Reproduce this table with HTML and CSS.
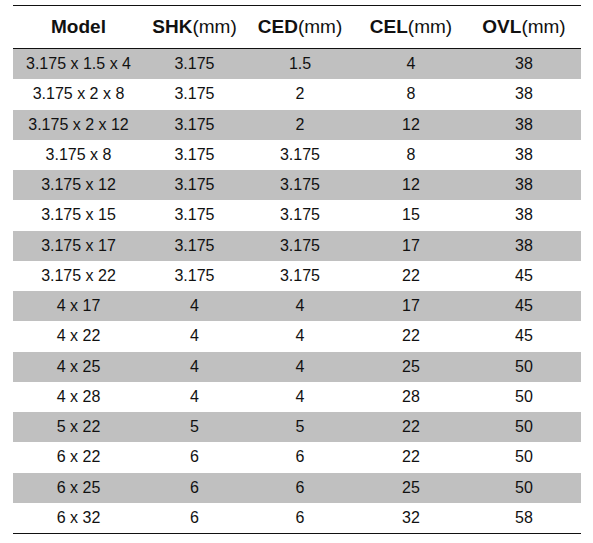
FILE: index.html
```html
<!DOCTYPE html>
<html>
<head>
<meta charset="utf-8">
<link rel="stylesheet" href="styles.css">
</head>
<body>
<table class="spec">
  <colgroup>
    <col class="c1"><col class="c2"><col class="c3"><col class="c4"><col class="c5">
  </colgroup>
  <thead>
    <tr>
      <th><b>Model</b></th>
      <th><b>SHK</b>(mm)</th>
      <th><b>CED</b>(mm)</th>
      <th><b>CEL</b>(mm)</th>
      <th><b>OVL</b>(mm)</th>
    </tr>
  </thead>
  <tbody>
    <tr class="g"><td>3.175 x 1.5 x 4</td><td>3.175</td><td>1.5</td><td>4</td><td>38</td></tr>
    <tr><td>3.175 x 2 x 8</td><td>3.175</td><td>2</td><td>8</td><td>38</td></tr>
    <tr class="g"><td>3.175 x 2 x 12</td><td>3.175</td><td>2</td><td>12</td><td>38</td></tr>
    <tr><td>3.175 x 8</td><td>3.175</td><td>3.175</td><td>8</td><td>38</td></tr>
    <tr class="g"><td>3.175 x 12</td><td>3.175</td><td>3.175</td><td>12</td><td>38</td></tr>
    <tr><td>3.175 x 15</td><td>3.175</td><td>3.175</td><td>15</td><td>38</td></tr>
    <tr class="g"><td>3.175 x 17</td><td>3.175</td><td>3.175</td><td>17</td><td>38</td></tr>
    <tr><td>3.175 x 22</td><td>3.175</td><td>3.175</td><td>22</td><td>45</td></tr>
    <tr class="g"><td>4 x 17</td><td>4</td><td>4</td><td>17</td><td>45</td></tr>
    <tr><td>4 x 22</td><td>4</td><td>4</td><td>22</td><td>45</td></tr>
    <tr class="g"><td>4 x 25</td><td>4</td><td>4</td><td>25</td><td>50</td></tr>
    <tr><td>4 x 28</td><td>4</td><td>4</td><td>28</td><td>50</td></tr>
    <tr class="g"><td>5 x 22</td><td>5</td><td>5</td><td>22</td><td>50</td></tr>
    <tr><td>6 x 22</td><td>6</td><td>6</td><td>22</td><td>50</td></tr>
    <tr class="g"><td>6 x 25</td><td>6</td><td>6</td><td>25</td><td>50</td></tr>
    <tr><td>6 x 32</td><td>6</td><td>6</td><td>32</td><td>58</td></tr>
  </tbody>
</table>
</body>
</html>
```
FILE: styles.css
```css
html, body {
  margin: 0;
  padding: 0;
  background: #fff;
}
body {
  padding: 5px 0 0 13px;
  font-family: "Liberation Sans", Arial, sans-serif;
  color: #111;
}
.spec {
  border-collapse: collapse;
  table-layout: fixed;
  width: 568px;
  border-top: 1px solid #111;
  border-bottom: 1px solid #111;
}
.c1 { width: 131px; }
.c2 { width: 101px; }
.c3 { width: 110px; }
.c4 { width: 112px; }
.c5 { width: 114px; }
.spec th {
  height: 42px;
  padding: 0;
  font-size: 19px;
  font-weight: normal;
  text-align: center;
  vertical-align: middle;
  border-bottom: 1px solid #111;
  white-space: nowrap;
}
.spec th b {
  font-weight: bold;
}
.spec td {
  height: 30.25px;
  padding: 0;
  font-size: 16px;
  text-align: center;
  vertical-align: middle;
  white-space: nowrap;
}
.spec tr.g td {
  background: #c0c0c0;
}
```
